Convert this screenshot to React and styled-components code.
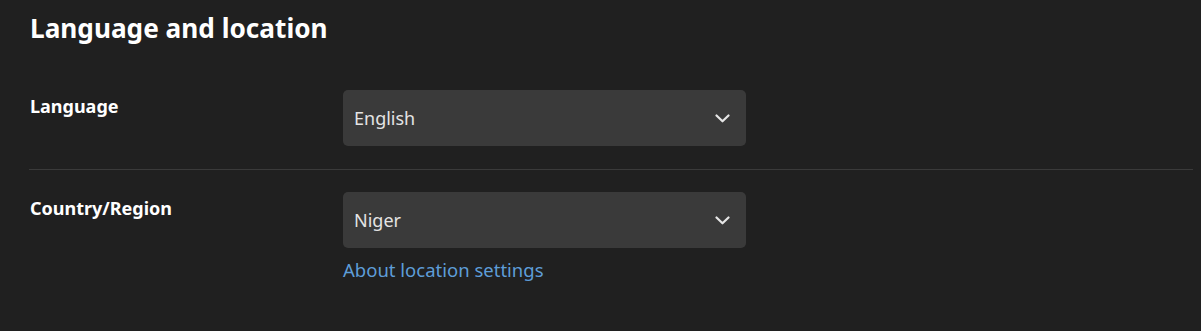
import React from "react";
import styled, { createGlobalStyle } from "styled-components";

const Global = createGlobalStyle`
  html, body { margin: 0; padding: 0; background: #202020; }
  body { font-family: "Noto Sans", "Open Sans", sans-serif; color: #ffffff; }
`;

const Page = styled.div`
  padding: 9px 8px 0 29px;
  min-height: 331px;
  box-sizing: border-box;
  background: #202020;
`;

const Title = styled.h1`
  margin: 0 0 0 1px;
  font-size: 26.2px;
  font-weight: 700;
  line-height: 38px;
  color: #ffffff;
`;

const Section = styled.div`
  margin-top: 20px;
`;

const Row = styled.div`
  display: grid;
  grid-template-columns: 314px 403px;
  padding: ${(p) => (p.$first ? "23px" : "22px")} 0 23px;
  border-bottom: ${(p) => (p.$divider ? "1px solid #3a3a3a" : "none")};
`;

const Label = styled.div`
  padding: 3px 0 0 1px;
  font-size: 18px;
  font-weight: 700;
  line-height: 26px;
  color: #ffffff;
`;

const Field = styled.div`
  display: flex;
  flex-direction: column;
  gap: 9px;
`;

const Select = styled.div`
  display: flex;
  align-items: center;
  justify-content: space-between;
  height: 56px;
  padding: 0 16px 0 11px;
  box-sizing: border-box;
  background: #3a3a3a;
  border-radius: 5px;
  font-size: 18px;
  color: #e4e4e4;
`;

const Link = styled.a`
  font-size: 18.5px;
  color: #5e9dd8;
  text-decoration: none;
  line-height: 26px;
`;

const Chevron = () => (
  <svg width="15" height="9" viewBox="0 0 15 9" fill="none">
    <path d="M1.5 1.5 L7.5 7.3 L13.5 1.5" stroke="#e6e6e6" strokeWidth="2.2" strokeLinecap="round" strokeLinejoin="round" />
  </svg>
);

export default function App() {
  return (
    <Page>
      <Global />
      <Title>Language and location</Title>
      <Section>
        <Row $first $divider>
          <Label>Language</Label>
          <Field>
            <Select>
              <span>English</span>
              <Chevron />
            </Select>
          </Field>
        </Row>
        <Row>
          <Label>Country/Region</Label>
          <Field>
            <Select>
              <span>Niger</span>
              <Chevron />
            </Select>
            <Link href="#">About location settings</Link>
          </Field>
        </Row>
      </Section>
    </Page>
  );
}
